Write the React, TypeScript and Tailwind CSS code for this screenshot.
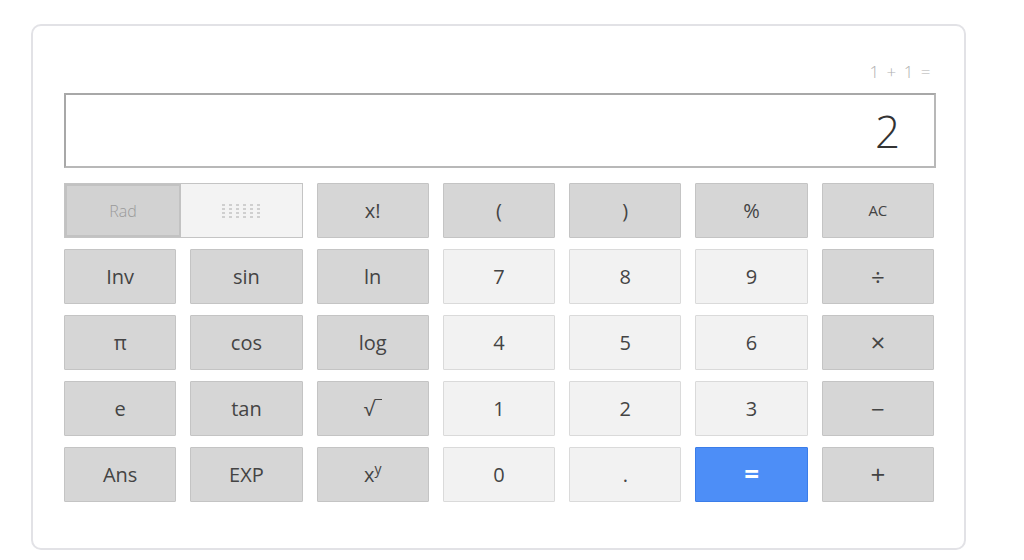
import React from 'react';

type Kind = 'dark' | 'light' | 'blue';

const keys: { label: React.ReactNode; kind: Kind; size?: string }[][] = [
  [
    { label: 'x!', kind: 'dark' },
    { label: '(', kind: 'dark' },
    { label: ')', kind: 'dark' },
    { label: '%', kind: 'dark' },
    { label: 'AC', kind: 'dark', size: 'text-[15px]' },
  ],
  [
    { label: 'Inv', kind: 'dark' },
    { label: 'sin', kind: 'dark' },
    { label: 'ln', kind: 'dark' },
    { label: '7', kind: 'light' },
    { label: '8', kind: 'light' },
    { label: '9', kind: 'light' },
    { label: '÷', kind: 'dark', size: 'text-[24px]' },
  ],
  [
    { label: 'π', kind: 'dark' },
    { label: 'cos', kind: 'dark' },
    { label: 'log', kind: 'dark' },
    { label: '4', kind: 'light' },
    { label: '5', kind: 'light' },
    { label: '6', kind: 'light' },
    { label: '×', kind: 'dark', size: 'text-[26px]' },
  ],
  [
    { label: 'e', kind: 'dark' },
    { label: 'tan', kind: 'dark' },
    {
      label: (
        <span className="flex items-start">
          <span>√</span>
          <span className="mt-[5px] inline-block w-[7px] border-t border-[#444]" />
        </span>
      ),
      kind: 'dark',
    },
    { label: '1', kind: 'light' },
    { label: '2', kind: 'light' },
    { label: '3', kind: 'light' },
    { label: '−', kind: 'dark', size: 'text-[24px]' },
  ],
  [
    { label: 'Ans', kind: 'dark' },
    { label: 'EXP', kind: 'dark' },
    {
      label: (
        <span>
          x<sup className="text-[14px] relative -top-[8px]">y</sup>
        </span>
      ),
      kind: 'dark',
    },
    { label: '0', kind: 'light' },
    { label: '.', kind: 'light' },
    { label: '=', kind: 'blue', size: 'text-[26px]' },
    { label: '+', kind: 'dark', size: 'text-[26px]' },
  ],
];

const kindClass: Record<Kind, string> = {
  dark: 'bg-[#d6d6d6] border-[#c4c4c4] text-[#444]',
  light: 'bg-[#f2f2f2] border-[#dadada] text-[#444]',
  blue: 'bg-[#4d8ef7] border-[#3b7de9] text-white font-bold',
};

const Key = ({ label, kind, size }: { label: React.ReactNode; kind: Kind; size?: string }) => (
  <button
    className={`h-[55px] flex items-center justify-center border rounded-[1px] ${kindClass[kind]} ${
      size ?? 'text-[20px]'
    }`}
  >
    {label}
  </button>
);

const RadToggle = () => (
  <div className="col-span-2 h-[55px] flex border border-[#c4c4c4]">
    <div className="w-[116px] flex items-center justify-center bg-[#d2d2d2] border-2 border-[#c2c2c2] text-[16px] text-[#9a9a9a] font-light">
      Rad
    </div>
    <div className="flex-1 flex items-center justify-center bg-[#f3f3f3]">
      <div className="grid grid-cols-6 gap-x-[4px] gap-y-[2px]">
        {Array.from({ length: 24 }).map((_, i) => (
          <span key={i} className="w-[3px] h-[2px] bg-[#cfcfcf]" />
        ))}
      </div>
    </div>
  </div>
);

export default function App() {
  return (
    <div className="w-[1024px] h-[560px] bg-white pt-[24px] pl-[31px]" style={{ fontFamily: '"Open Sans", "Noto Sans", sans-serif' }}>
      <div className="w-[935px] h-[526px] border-2 border-[#e2e2e6] rounded-[10px] pl-[31px] pr-[28px]">
        <div className="h-[67px] flex items-end justify-end pr-[4px] pb-[9px] text-[17px] font-light text-[#b0b0b0] tracking-[1.5px]">
          1 + 1 =
        </div>
        <div className="h-[75px] border-2 border-[#b8b8b8] border-t-[#a8a8a8] border-l-[#a8a8a8] flex items-center justify-end pr-[34px] text-[44px] font-thin text-[#333]">
          2
        </div>
        <div className="mt-[15px] w-[870px] grid grid-cols-7 gap-x-[14px] gap-y-[11px]">
          <RadToggle />
          {keys[0].map((k, i) => (
            <Key key={`r0-${i}`} {...k} />
          ))}
          {keys.slice(1).flatMap((row, r) =>
            row.map((k, i) => <Key key={`r${r + 1}-${i}`} {...k} />)
          )}
        </div>
      </div>
    </div>
  );
}
